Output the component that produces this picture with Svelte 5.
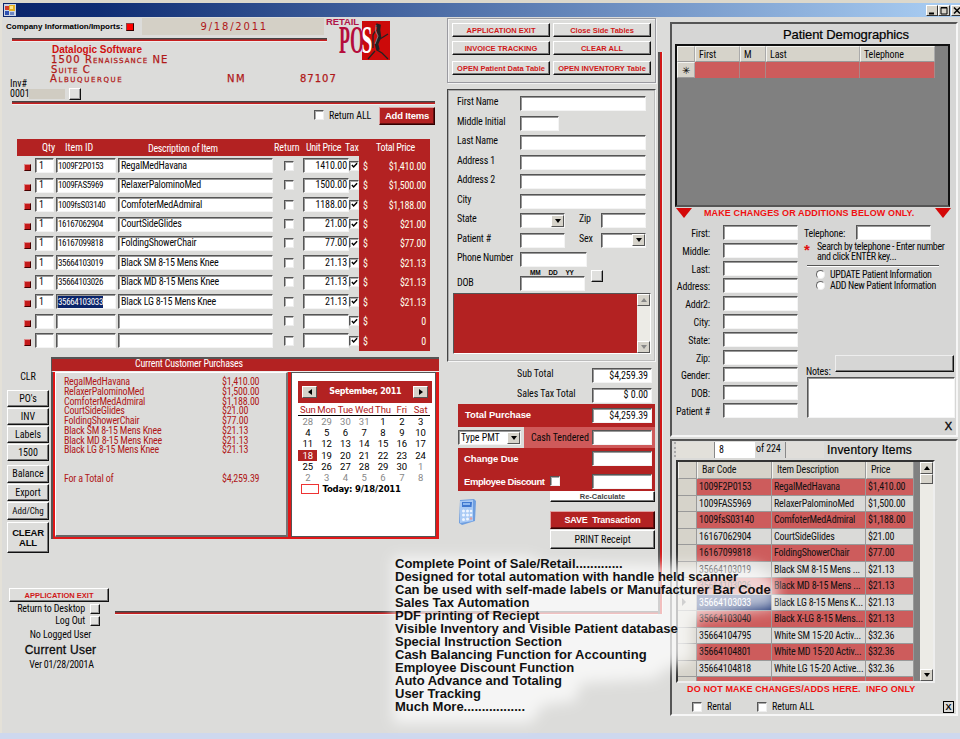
<script>
  const items = [
    { id: '1009F2P0153', name: 'RegalMedHavana', price: '1410.00', total: '$1,410.00' },
    { id: '1009FAS5969', name: 'RelaxerPalominoMed', price: '1500.00', total: '$1,500.00' },
    { id: '1009fsS03140', name: 'ComfoterMedAdmiral', price: '1188.00', total: '$1,188.00' },
    { id: '16167062904', name: 'CourtSideGlides', price: '21.00', total: '$21.00' },
    { id: '16167099818', name: 'FoldingShowerChair', price: '77.00', total: '$77.00' },
    { id: '35664103019', name: 'Black SM 8-15 Mens Knee', price: '21.13', total: '$21.13' },
    { id: '35664103026', name: 'Black MD 8-15 Mens Knee', price: '21.13', total: '$21.13' },
    { id: '35664103033', name: 'Black LG 8-15 Mens Knee', price: '21.13', total: '$21.13', selected: true },
    { id: '', name: '', price: '', total: '0' },
    { id: '', name: '', price: '', total: '0' }
  ];
  const purchases = items.filter((i) => i.id);
  const inventory = [
    ['1009F2P0153', 'RegalMedHavana', '$1,410.00'],
    ['1009FAS5969', 'RelaxerPalominoMed', '$1,500.00'],
    ['1009fsS03140', 'ComfoterMedAdmiral', '$1,188.00'],
    ['16167062904', 'CourtSideGlides', '$21.00'],
    ['16167099818', 'FoldingShowerChair', '$77.00'],
    ['35664103019', 'Black SM 8-15 Mens ...', '$21.13'],
    ['35664103026', 'Black MD 8-15 Mens ...', '$21.13'],
    ['35664103033', 'Black LG 8-15 Mens K...', '$21.13'],
    ['35664103040', 'Black X-LG 8-15 Mens...', '$21.13'],
    ['35664104795', 'White SM 15-20 Activ...', '$32.36'],
    ['35664104801', 'White MD 15-20 Activ...', '$32.36'],
    ['35664104818', 'White LG 15-20 Active...', '$32.36'],
    ['', '', '']
  ];
  const weekdays = ['Sun', 'Mon', 'Tue', 'Wed', 'Thu', 'Fri', 'Sat'];
  const days = Array.from({ length: 42 }, (_, i) => {
    const n = i - 3;
    if (n < 1) return { n: n + 31, out: true };
    if (n > 30) return { n: n - 30, out: true };
    return { n, out: false, today: n === 18 };
  });
  const patientFields = ['First:', 'Middle:', 'Last:', 'Address:', 'Addr2:', 'City:', 'State:', 'Zip:', 'Gender:', 'DOB:', 'Patient #'];
  const pitch = [
    'Complete Point of Sale/Retail.............',
    'Designed for total automation with handle held scanner',
    'Can be used with self-made labels or Manufacturer Bar Code',
    'Sales Tax Automation',
    'PDF printing of Reciept',
    'Visible Inventory and Visible Patient database',
    'Special Instruction Section',
    'Cash Balancing Function for Accounting',
    'Employee Discount Function',
    'Auto Advance and Totaling',
    'User Tracking',
    'Much More.................'
  ];
</script>

{#snippet check(on)}
  <span class="check">
    {#if on}<svg viewBox="0 0 8 8" width="7" height="7"><path d="M1 3.4 3 5.6 7 1.4" fill="none" stroke="#000" stroke-width="1.7" /></svg>{/if}
  </span>
{/snippet}

{#snippet arrow(dir)}
  <span class="arrowbtn"><i class={dir}></i></span>
{/snippet}

<div class="app">
  <header class="titlebar">
    <svg width="12" height="12" viewBox="0 0 12 12">
      <rect x="0" y="0" width="12" height="12" fill="#c9d3e4" />
      <rect x="1" y="2" width="4" height="4" fill="#d23c2a" />
      <rect x="1" y="7" width="4" height="4" fill="#2d50b0" />
      <rect x="5" y="1" width="6" height="6" fill="#e8b020" />
      <rect x="6" y="2" width="3" height="3" fill="#ffe58a" />
      <rect x="6" y="8" width="4" height="3" fill="#6d87c4" />
    </svg>
    <div class="winbtns">
      <span><svg width="10" height="9"><path d="M2 7.5h5" stroke="#000" stroke-width="2" /></svg></span>
      <span><svg width="10" height="9"><path d="M2 1.5h6v6.5h-6z M2 2h6" stroke="#000" fill="none" /></svg></span>
      <span class="close"><svg width="10" height="9"><path d="M2 1.5 8 7.5M8 1.5 2 7.5" stroke="#000" stroke-width="1.5" /></svg></span>
    </div>
  </header>

  <div class="body">
    <div class="main">
      <div class="work">
        <section class="left">
          <div class="company">
            <div class="cinfo">
              <div class="chead">
                <b class="ctitle">Company Information/Imports:</b>
                <i class="sq bright"></i>
                <div class="date">9/18/2011</div>
              </div>
              <div class="rule short"></div>
            </div>
            <svg class="logo" width="66" height="44" viewBox="0 0 66 44">
              <rect x="37" y="4" width="28" height="39" fill="#cc0a0a" />
              <text x="1" y="8" font-family="Liberation Sans" font-weight="bold" font-size="9.5" fill="#b01548" textLength="33">RETAIL</text>
              <text x="0" y="0" font-family="Liberation Serif" font-weight="bold" font-size="39" fill="#b50d3c" transform="translate(14 36) scale(.46 1)">PO</text>
              <text x="0" y="0" font-family="Liberation Serif" font-weight="bold" font-size="39" fill="#fff" transform="translate(36.500 36) scale(.5 1)">S</text>
              <g stroke="#222" fill="none">
                <path d="M51 8 54 9 53.500 13 54.500 20 51.500 27 53 33" stroke-width="3.500" />
                <path d="M51 13 48 18 48 31M55 22 63 17M50 34 43 42M52 33 57 36 63 42" stroke-width="1.300" />
                <path d="M51 8 50.500 14 53 19 50 27" stroke="#999" stroke-width=".8" />
              </g>
            </svg>
          </div>

          <div class="address">
            <b>Datalogic Software</b>
            <span>1500 Renaissance NE</span>
            <span>Suite C</span>
            <div class="cityline"><span>Albuquerque</span><span>NM</span><span>87107</span></div>
          </div>
          <div class="invno">
            <div><span>Inv#</span><span class="num">0001</span></div>
            <i class="mini"></i>
          </div>
          <div class="rule long"></div>
          <div class="addrow">
            {@render check(false)}<span>Return ALL</span>
            <button class="redbtn add">Add Items</button>
          </div>

          <div class="items">
            <div class="ihead">
              <span class="h1">Qty</span><span class="h2">Item ID</span><span class="h3">Description of Item</span>
              <span class="h4">Return</span><span class="h5">Unit Price</span><span class="h6">Tax</span><span class="h7">Total Price</span>
            </div>
            {#each items as it}
              <div class="irow">
                <i class="sq"></i>
                <span class="in qty">{it.id ? '1' : ''}</span>
                <span class="in iid"><em class:sel={it.selected}>{it.id}</em></span>
                <span class="in desc">{it.name}</span>
                {@render check(false)}
                <span class="in price">{it.price}</span>
                {@render check(true)}
                <span class="tot"><span>$</span><span>{it.total}</span></span>
              </div>
            {/each}
          </div>

          <div class="lower">
            <nav class="side">
              <span class="clr">CLR</span>
              <button>PO's</button>
              <button>INV</button>
              <button>Labels</button>
              <button>1500</button>
              <button class="bal">Balance</button>
              <button>Export</button>
              <button class="sm">Add/Chg</button>
              <button class="clear">CLEAR<br />ALL</button>
            </nav>
            <div class="purch">
              <div class="phead">Current Customer Purchases</div>
              <div class="pbody">
                <div class="plist">
                  {#each purchases as p}
                    <div><span>{p.name}</span><span>{p.total}</span></div>
                  {/each}
                  <div class="ptotal"><span>For a Total of</span><span>$4,259.39</span></div>
                </div>
                <div class="cal">
                  <div class="chd">{@render arrow('l')}<b>September, 2011</b>{@render arrow('r')}</div>
                  <div class="wk">{#each weekdays as w}<span>{w}</span>{/each}</div>
                  <div class="days">
                    {#each days as d}<span class:out={d.out} class:today={d.today}>{d.n}</span>{/each}
                  </div>
                  <div class="today-line"><i></i><b>Today: 9/18/2011</b></div>
                </div>
              </div>
            </div>
          </div>
        </section>

        <section class="mid">
          <div class="cmds">
            <button>APPLICATION EXIT</button><button>Close Side Tables</button>
            <button>INVOICE TRACKING</button><button>CLEAR ALL</button>
            <button>OPEN Patient Data Table</button><button>OPEN INVENTORY Table</button>
          </div>
          <div class="customer">
            {#each ['First Name', 'Middle Initial', 'Last Name', 'Address 1', 'Address 2', 'City'] as f, i}
              <div class="frow"><span>{f}</span><span class="in" class:short={i === 1}></span></div>
            {/each}
            <div class="frow"><span>State</span><span class="in sel44">{@render arrow('d')}</span><span class="l2">Zip</span><span class="in w44"></span></div>
            <div class="frow"><span>Patient #</span><span class="in w45"></span><span class="l2">Sex</span><span class="in w44 combo">{@render arrow('d')}</span></div>
            <div class="frow"><span>Phone Number</span><span class="in phone"></span></div>
            <div class="dobrow">
              <span class="dl">DOB</span>
              <div><div class="mdy"><span>MM</span><span>DD</span><span>YY</span></div><span class="in dob"></span></div>
              <i class="mini"></i>
            </div>
            <div class="memo"><div class="scroll">{@render arrow('u dim')}{@render arrow('d dim')}</div></div>
          </div>

          <div class="sums">
            <div class="srow"><span>Sub Total</span><span class="in">$4,259.39</span></div>
            <div class="srow"><span>Sales Tax Total</span><span class="in">$ 0.00</span></div>
          </div>
          <div class="pay">
            <div class="red"><b>Total Purchase</b><span class="in">$4,259.39</span></div>
            <div class="prow">
              <span class="in type">Type PMT{@render arrow('d')}</span>
              <div class="pink"><span>Cash Tendered</span><span class="in"></span></div>
            </div>
            <div class="red two">
              <div><b>Change Due</b><span class="in"></span></div>
              <div><b class="emp">Employee Discount</b>{@render check(false)}<span class="in"></span></div>
            </div>
          </div>
          <div class="actions">
            <svg class="calc" width="19" height="26" viewBox="0 0 19 26">
              <path d="M2 1 16 0 18 2 17 22 4 26 1 24z" fill="#6f9fe0" />
              <path d="M2 2 15 1 15 22 2 24z" fill="#a9caf5" />
              <path d="M4 3 14 3 13.500 8 4 8z" fill="#3f78d0" />
              <path d="M5 4h7v2h-7z" fill="#8db8f0" />
              <g fill="#eef5ff"><circle cx="5.500" cy="12" r="1.500" /><circle cx="9.500" cy="12" r="1.500" /><circle cx="13" cy="12" r="1.300" /><circle cx="5.500" cy="16" r="1.500" /><circle cx="9.500" cy="16" r="1.500" /><circle cx="13" cy="16" r="1.300" /><circle cx="5.500" cy="20.500" r="1.500" /><circle cx="9.500" cy="20" r="1.500" /></g>
              <circle cx="13" cy="19.500" r="1.300" fill="#e0a0a0" />
            </svg>
            <div class="acol">
              <button class="recalc">Re-Calculate</button>
              <button class="redbtn save">SAVE&nbsp; Transaction</button>
              <button class="print">PRINT Receipt</button>
            </div>
          </div>
        </section>
      </div>

      <div class="foot">
        <div class="user">
          <button class="exit">APPLICATION EXIT</button>
          <div class="ul">Return to Desktop<i class="mini s"></i></div>
          <div class="ul">Log Out<i class="mini s"></i></div>
          <span class="nolog">No Logged User</span>
          <span class="cur">Current User</span>
          <span class="ver">Ver 01/28/2001A</span>
        </div>
        <div class="rule grow"></div>
      </div>
    </div>
    <div class="vbar"></div>

    <aside class="right">
      <section class="panel patient">
        <h2>Patient Demographics</h2>
        <div class="pgrid">
          <div class="gh"><span class="c0"></span><span class="c1">First</span><span class="c2">M</span><span class="c3">Last</span><span class="c4">Telephone</span></div>
          <div class="gr"><span class="c0">✳</span><span class="c1"></span><span class="c2"></span><span class="c3"></span><span class="c4"></span></div>
        </div>
        <div class="warn"><i></i><b>MAKE CHANGES OR ADDITIONS BELOW ONLY.</b><i></i></div>
        <div class="pform">
          <div class="pf">
            {#each patientFields as f}<div><span>{f}</span><span class="in"></span></div>{/each}
          </div>
          <div class="pr">
            <div class="tel"><span>Telephone:</span><span class="in"></span></div>
            <div class="hint"><b>*</b><p>Search by telephone - Enter number<br />and click ENTER key...</p></div>
            <div class="hr"></div>
            <label><i class="radio"></i>UPDATE Patient Information</label>
            <label><i class="radio"></i>ADD New Patient Information</label>
            <div class="notes"><span>Notes:</span><button aria-label="Save notes"></button></div>
            <div class="in area"></div>
            <b class="x">X</b>
          </div>
        </div>
      </section>

      <section class="panel inv">
        <div class="ihd">
          <i class="grip"></i><i class="navl"></i><span class="pos">8</span><span class="of">of 224</span><i class="navr"></i>
          <h2>Inventory Items</h2>
        </div>
        <div class="igrid">
          <div class="tbl">
            <div class="tr th"><span></span><span>Bar Code</span><span>Item Description</span><span>Price</span></div>
            {#each inventory as r, i}
              <div class="tr" class:odd={i % 2 === 0}>
                <span class="rh">{#if i === 7}<i class="ptr"></i>{/if}</span>
                <span class:cursel={i === 7}>{r[0]}</span><span>{r[1]}</span><span>{r[2]}</span>
              </div>
            {/each}
          </div>
          <div class="scroll tall">{@render arrow('u')}<span class="thumb"></span><span class="sp"></span>{@render arrow('d')}</div>
        </div>
        <b class="info">DO NOT MAKE CHANGES/ADDS HERE.&nbsp; INFO ONLY</b>
        <div class="opts">
          {@render check(false)}<span class="o1">Rental</span>{@render check(false)}<span>Return ALL</span><b>X</b>
        </div>
      </section>
    </aside>
  </div>
  <div class="strip"></div>

  <div class="overlay">
    <svg width="440" height="200" viewBox="0 0 440 200">
      <defs><filter id="soft" x="-10%" y="-10%" width="120%" height="120%"><feGaussianBlur stdDeviation="7" /></filter></defs>
      <path d="M18 22H155L165 28 300 30H380L402 44V72L318 84V126L290 134 280 144 206 148 200 166 168 170 156 188H18z" fill="#fff" fill-opacity=".72" filter="url(#soft)" />
    </svg>
    <div class="lines">{#each pitch as line}<div>{line}</div>{/each}</div>
  </div>
</div>

<style>
  :global(body) { background: #dcdcda; }
  .app, .app :global(*) { box-sizing: border-box; }
  .app {
    position: relative; width: 960px; height: 739px; overflow: hidden;
    display: flex; flex-direction: column;
    background: #dcdcda; color: #080808; border-top: 3px solid #dcd8cc; border-left: 0;
    font: 10px/10px "Roboto Condensed", Roboto, "Liberation Sans", sans-serif; letter-spacing: -.2px; white-space: nowrap;
  }
  button { font: inherit; letter-spacing: inherit; color: inherit; padding: 0; margin: 0; background: #dddddb; white-space: nowrap;
    border: 1px solid; border-color: #fff #111 #111 #fff; box-shadow: inset -1px -1px #777; display: flex; align-items: center; justify-content: center; }
  h2 { margin: 0; font: 13px/14px "Liberation Sans", sans-serif; color: #000; -webkit-text-stroke: .2px #000; }
  p { margin: 0; }
  i, em { font-style: normal; display: block; }

  .titlebar { flex: none; height: 14px; margin-left: 3px; display: flex; justify-content: space-between; align-items: center; padding-left: 1px;
    background: linear-gradient(90deg, #0a246a, #0f2d74 10%, #a6caf0 97%); }
  .winbtns { display: flex; margin-right: -3px; }
  .winbtns span { width: 12px; height: 11px; background: #d6d3ca; border: 1px solid; border-color: #fff #333 #333 #fff; display: flex; }
  .winbtns .close { margin-left: 1px; }

  .body { flex: 1; display: flex; min-height: 0; border-left: 2px solid #e4e1d8; }
  .strip { flex: none; height: 6px; background: #ced8ee; }
  .main { width: 656px; flex: none; display: flex; flex-direction: column; }
  .work { height: 570px; display: flex; flex: none; }
  .left { width: 445px; flex: none; display: flex; flex-direction: column; }

  .in { height: 15px; background: #fff; border: 1px solid; border-color: #555 #f4f4f4 #f4f4f4 #555; box-shadow: inset 1px 1px #999; display: flex; align-items: center; padding: 0 3px; overflow: hidden; }
  .check { width: 10px; height: 10px; flex: none; background: #fff; border: 1px solid; border-color: #555 #eee #eee #555; box-shadow: inset 1px 1px #aaa; display: flex; align-items: center; justify-content: center; }
  .sq { width: 7px; height: 7px; background: #c41a1a; border: 1px solid; border-color: #d88 #400 #400 #d88; flex: none; }
  .sq.bright { width: 8px; height: 8px; background: #f00; border-color: #844 #300 #300 #844; }
  .mini { width: 12px; height: 12px; background: #e0e0de; border: 1px solid; border-color: #fff #111 #111 #fff; box-shadow: inset -1px -1px #999; flex: none; }
  .mini.s { width: 10px; height: 10px; }
  .rule { height: 4px; background: #c81e1e; border-top: 1px solid #444; border-bottom: 1px solid #eee; box-shadow: inset 0 1px #8c3232; }
  .arrowbtn { width: 13px; height: 12px; flex: none; background: #d6d3ca; border: 1px solid; border-color: #fff #555 #555 #fff; display: flex; align-items: center; justify-content: center; }
  .arrowbtn i { width: 0; height: 0; border: 3px solid transparent; }
  .arrowbtn .d { border-top: 4px solid #000; border-bottom: 0; }
  .arrowbtn .u { border-bottom: 4px solid #000; border-top: 0; }
  .arrowbtn .l { border-right: 4px solid #000; border-left: 0; }
  .arrowbtn .r { border-left: 4px solid #000; border-right: 0; }
  .arrowbtn .d.dim { border-top-color: #888; }
  .arrowbtn .u.dim { border-bottom-color: #888; }
  .redbtn { background: #b32222; color: #fff; font: bold 9.5px/12px "Liberation Sans", sans-serif; border-color: #e0a0a0 #300 #300 #e0a0a0; box-shadow: inset -1px -1px #611; }

  .company { display: flex; height: 26px; }
  .cinfo { width: 322px; }
  .chead { display: flex; height: 21px; align-items: flex-start; padding: 1px 0 0 4px; }
  .ctitle { width: 120px; font: bold 8px/18px "Liberation Sans", sans-serif; letter-spacing: 0; color: #000; }
  .chead .sq { margin: 5px 0 0 1px; }
  .date { margin-left: 8px; width: 184px; height: 17px; background: #d4d0c6; color: #b01818; padding-left: 59px; font: 10px/17px "DejaVu Sans", sans-serif; letter-spacing: 1.8px; }
  .rule.short { margin-left: 10px; width: 315px; }
  .logo { margin: 0 0 0 1px; flex: none; overflow: visible; letter-spacing: 0; }
  .address { margin: 1px 0 0 48px; display: flex; flex-direction: column; color: #b01818; font: 10px/9.7px "DejaVu Sans", sans-serif; font-variant: small-caps; height: 42px; }
  .address b { font: bold 10px/10px "Liberation Sans", sans-serif; font-variant: normal; letter-spacing: 0; color: #d01010; margin: 1px 0 0 2px; }
  .address > span { letter-spacing: 1.05px; -webkit-text-stroke: .25px #b01818; margin-left: 1px; }
  .cityline { display: grid; grid-template-columns: 177px 73px 60px; -webkit-text-stroke: .25px #b01818; letter-spacing: 1.6px; }
  .cityline span:nth-child(3) { letter-spacing: 1px; }
  .invno { display: flex; height: 13px; margin-left: 8px; align-items: flex-end; letter-spacing: 0; }
  .invno > div { width: 59px; display: flex; flex-direction: column; margin-top: -10px; }
  .invno .num { background: linear-gradient(90deg, transparent 19px, #d0ccc2 19px 55px, transparent 55px); }
  .invno .mini { margin-bottom: -1px; }
  .rule.long { margin: 2px 0 0 10px; width: 423px; }
  .addrow { display: flex; height: 20px; margin-top: 1px; margin-left: 312px; align-items: center; }
  .addrow > :global(.check) { margin-top: -2px; }
  .addrow > span:nth-child(2) { width: 49px; margin-left: 5px; letter-spacing: -.1px; }
  .add { width: 56px; height: 18px; margin-left: 1px; margin-top: 0; }

  .items { margin: 13px 0 0 15px; width: 413px; height: 212px; background: linear-gradient(90deg, transparent 342px, #b32222 342px); }
  .ihead { height: 17px; background: #b32222; color: #fff; display: flex; align-items: center; letter-spacing: 0; }
  .ihead .h1 { margin-left: 25px; width: 23px; }
  .ihead .h2 { width: 83px; } .ihead .h3 { width: 126px; padding-top: 3px; letter-spacing: -.3px; }
  .ihead .h4 { width: 32px; } .ihead .h5 { width: 39px; letter-spacing: -.3px; } .ihead .h6 { width: 31px; }
  .ihead .h7 { letter-spacing: -.3px; }
  .irow { display: flex; align-items: center; height: 19.45px; }
  .irow .sq { margin: 4px 4px 0 7px; }
  .qty { width: 19px; } .iid { width: 60px; margin-left: 2px; padding-left: 1px; font-size: 9px; letter-spacing: -.35px; } .desc { width: 155px; margin-left: 2px; padding-left: 2px; margin-right: 11px; }
  .iid .sel { background: #0a246a; color: #fff; line-height: 12px; }
  .price { width: 46px; margin-left: 9px; justify-content: flex-end; padding-right: 1px; letter-spacing: -.1px; }
  .tot { flex: 1; display: flex; justify-content: space-between; color: #ffe; padding: 2px 4px 0 4px; letter-spacing: -.2px; }

  .lower { display: flex; margin-top: 6px; }
  .side { width: 42px; margin-left: 5px; display: flex; flex-direction: column; gap: 1px; letter-spacing: 0; }
  .side button { height: 17px; } .side .clr { height: 32px; text-align: center; padding-top: 15px; }
  .side .bal { margin-top: 3px; height: 18px; } .side .sm { font-size: 9px; height: 18px; }
  .side .clear { height: 31px; margin-top: 1px; font: bold 9.5px/10px "Liberation Sans", sans-serif; text-align: center; letter-spacing: -.2px; }
  .purch { margin-left: 2px; width: 388px; height: 182px; display: flex; flex-direction: column; }
  .phead { height: 14px; background: #b32222; border-top: 2px solid #555; border-left: 1px solid #555; color: #fff; padding: 0 0 0 83px; line-height: 10px; }
  .pbody { flex: 1; display: flex; border: solid #555; border-width: 0 0 0 2px; background: #e01818; padding: 0 3px 2px 2px; gap: 3px; border-top: 1px solid #eee; }
  .plist { width: 237px; border: 1px solid #fff; border-right: 2px solid #777; border-bottom: 2px solid #666; background: #dcdcda; color: #b01818; padding: 4px 0 0 8px; line-height: 9.75px; }
  .plist div { display: grid; grid-template-columns: 158px auto; }
  .plist .ptotal { margin-top: 19px; }
  .cal { flex: 1; background: #fff; border: 1px solid #555; padding: 8px 3px 0 6px; display: flex; flex-direction: column; font: 10px/11px "Liberation Sans", sans-serif; letter-spacing: 0; }
  .chd { height: 22px; background: #b32222; color: #fff; display: flex; align-items: center; justify-content: space-between; padding: 0 4px; font: bold 8px/10px "DejaVu Sans", sans-serif; }
  .chd b { letter-spacing: -.3px; }
  .chd .arrowbtn { width: 15px; }
  .wk { display: grid; grid-template-columns: repeat(7, 18.8px); text-align: center; color: #b01818; border-bottom: 1px solid #000; height: 13px; padding-top: 1px; margin-right: 2px; font: 9.5px/11px Roboto, sans-serif; letter-spacing: -.1px; }
  .days { display: grid; grid-template-columns: repeat(7, 18.8px); text-align: center; font: 9.5px/11px Roboto, sans-serif; }
  .days span { height: 11.2px; color: #000; } .days .out { color: #888; } .days .today { background: #b32222; color: #fff; }
  .today-line { display: flex; gap: 3px; font: bold 8.5px/11px "DejaVu Sans", sans-serif; margin: 1px 0 0 3px; letter-spacing: -.2px; color: #000; }
  .today-line i { width: 18px; height: 10px; border: 1px solid #e33; }

  .mid { width: 209px; flex: none; display: flex; flex-direction: column; padding-top: 1px; }
  .cmds { height: 65px; border: 1px solid #9a9aa0; box-shadow: inset 1px 1px #f2f2f2, 1px 1px #f2f2f2; display: grid; grid-template-columns: 98px 98px; grid-template-rows: 14px 14px 14px; gap: 4px 3px; padding: 4px 0 0 4px; }
  .cmds button { color: #d01818; font: bold 7.5px/9px "Liberation Sans", sans-serif; letter-spacing: 0; }
  .cmds button:nth-child(n+5) { margin-top: 2px; height: 14px; }
  .customer { margin-top: 6px; height: 273px; border: 1px solid; border-color: #444 #f6f6f6 #f6f6f6 #444; box-shadow: inset 1px 1px #aaa, inset -1px -1px #bbb; padding: 4px 5px 0 5px; }
  .frow { height: 19.5px; display: flex; align-items: center; padding-left: 4px; }
  .frow > span:first-child { width: 63px; margin-top: -3px; letter-spacing: -.2px; }
  .frow .in { width: 126px; } .frow .in.short { width: 39px; }
  .frow .in.sel44 { width: 45px; padding: 0; justify-content: flex-end; } .frow .w44 { width: 45px; } .frow .w45 { width: 45px; } .frow .combo { padding: 0; justify-content: flex-end; }
  .l2 { width: 22px; margin: -3px 0 0 14px; } .frow .phone { width: 67px; }
  .dobrow { display: flex; height: 23px; padding-left: 4px; align-items: flex-start; }
  .dobrow .dl { width: 63px; padding-top: 8px; }
  .mdy { display: flex; gap: 8px; padding-left: 10px; font: bold 6.5px/6px "Liberation Sans", sans-serif; }
  .dob { width: 65px; } .dobrow .mini { margin: 0 0 0 6px; }
  .memo { height: 61px; width: 198px; background: #b32222; border: 1px solid; border-color: #555 #fff #fff #555; display: flex; justify-content: flex-end; }
  .scroll { width: 13px; display: flex; flex-direction: column; justify-content: space-between; background: #ecebe6; }

  .sums { padding: 4px 4px 1px 70px; letter-spacing: -.05px; }
  .srow { display: flex; height: 19.5px; align-items: center; justify-content: space-between; }
  .srow > span:first-child { margin-top: -3px; }
  .srow .in, .pay .in { width: 60px; justify-content: flex-end; }
  .pay { margin: -2px 0 0 11px; width: 197px; letter-spacing: -.05px; }
  .pay b { font: bold 9.5px/10px "Liberation Sans", sans-serif; letter-spacing: -.1px; }
  .red { height: 23px; background: #b32222; color: #fff; display: flex; align-items: center; justify-content: space-between; padding: 0 3px 0 7px; }
  .red b { margin-top: -2px; }
  .red .in { color: #111; }
  .prow { height: 21px; display: flex; justify-content: space-between; align-items: center; }
  .prow .in.type { width: 63px; justify-content: space-between; padding: 0 0 0 2px; }
  .pink { width: 131px; height: 21px; background: #cf5a5a; display: flex; align-items: center; justify-content: space-between; padding: 0 3px 0 7px; }
  .red.two { height: 43px; flex-direction: column; align-items: stretch; padding: 3px 3px 2px 6px; }
  .red.two > div { display: flex; justify-content: space-between; align-items: center; }
  .red.two b { padding-top: 2px; } .red.two .emp { letter-spacing: -.45px; } .red.two div > :global(.check) { margin: -2px 27px 0 0; }
  .actions { display: flex; margin: 0 0 0 11px; }
  .calc { margin: 8px 73px 0 0; flex: none; }
  .acol { width: 105px; display: flex; flex-direction: column; }
  .recalc { height: 11px; background: #fff; font: bold 7.5px/8px "Liberation Sans", sans-serif; color: #444; letter-spacing: 0; }
  .save { height: 18px; margin-top: 9px; font-size: 9px; } .print { height: 19px; margin-top: 1px; background: #e2e2e0; letter-spacing: 0; }

  .foot { display: flex; }
  .user { width: 111px; display: flex; flex-direction: column; align-items: center; }
  .exit { width: 100px; height: 14px; color: #d01818; font: bold 7.5px/9px "Liberation Sans", sans-serif; letter-spacing: 0; margin: 1px 0 0 3px; }
  .ul { height: 11px; display: flex; align-items: center; gap: 5px; align-self: flex-end; margin: 1px 13px 0 0; letter-spacing: -.15px; }
  .nolog { margin-top: 4px; margin-left: 6px; letter-spacing: -.1px; } .cur { font: 12px/12px "Liberation Sans", sans-serif; margin-top: 4px; margin-left: 6px; letter-spacing: .25px; -webkit-text-stroke: .3px #111; } .ver { margin-top: 4px; margin-left: 8px; letter-spacing: -.25px; }
  .rule.grow { flex: 1; margin: 24px 0 0 2px; }
  .vbar { width: 5px; height: 562px; margin: 35px 0 0 0; flex: none; background: linear-gradient(90deg, #555 0 2px, #d01818 2px 4px, #eee 4px); }

  .right { width: 288px; margin: 5px 0 0 7px; flex: none; display: flex; flex-direction: column; gap: 2px; }
  .panel { background: #d6d6d5; border: 2px solid; border-color: #555 #f6f6f6 #f6f6f6 #555; display: flex; flex-direction: column; }
  .patient { height: 415px; }
  .patient h2 { margin: 4px 0 0 111px; letter-spacing: -.1px; }
  .pgrid { margin: 2px 0 0 3px; width: 275px; height: 163px; background: #808080; border: 2px solid; border-color: #111 #111 #555 #111; }
  .pgrid > div { display: flex; height: 16px; letter-spacing: -.1px; }
  .pgrid .c0 { width: 18px; text-align: center; line-height: 15px; } .c1 { width: 45px; } .c2 { width: 26px; } .c3 { width: 94px; } .c4 { width: 75px; }
  .gh span, .gr .c0 { background: #d6d3ca; border: 1px solid; border-color: #f4f4f0 #aaa #999 #f4f4f0; }
  .gh span { padding: 3px 0 0 3px; } .gr span:not(.c0) { background: #cd5c5c; border-right: 1px solid #a88; }
  .warn { display: flex; align-items: flex-start; padding: 0 0 0 4px; height: 18px; color: #f01010; }
  .warn b { width: 243px; padding-left: 12px; font: bold 9px/12px "Liberation Sans", sans-serif; letter-spacing: .12px; }
  .warn i { border: 8px solid transparent; border-top: 10px solid #d40808; border-bottom: 0; margin-top: 1px; }
  .pform { display: flex; }
  .pf { width: 126px; }
  .pf div { height: 17.8px; display: flex; align-items: flex-start; }
  .pf div > span:first-child { width: 38px; text-align: right; margin: 4px 13px 0 0; } .pf .in { width: 75px; }
  .pr { flex: 1; padding-left: 6px; display: flex; flex-direction: column; }
  .tel { display: flex; gap: 0; align-items: flex-start; } .tel span:first-child { width: 52px; padding-top: 4px; } .tel .in { width: 75px; }
  .hint { display: flex; height: 26px; margin-top: 1px; } .hint b { width: 13px; color: #e01010; font: bold 15px/17px "Liberation Sans", sans-serif; }
  .hint p { padding-top: 1px; letter-spacing: -.35px; }
  .hr { width: 132px; height: 2px; margin: -2px 0 2px 3px; background: #555; border-bottom: 1px solid #fff; }
  .pr label { display: flex; align-items: center; height: 11px; padding-left: 12px; gap: 5px; letter-spacing: -.35px; }
  .radio { width: 9px; height: 9px; border-radius: 50%; background: #fff; border: 1px solid; border-color: #666 #eee #eee #666; }
  .notes { margin-top: 63px; display: flex; height: 23px; align-items: flex-end; } .notes span { width: 31px; padding-left: 2px; } .notes button { width: 119px; height: 17px; margin-bottom: 5px; background: transparent; border-color: #eee #111 #111 #eee; }
  .in.area { height: 41px; width: 148px; margin-left: 3px; }
  .x { text-align: right; padding: 3px 4px 0 0; font: 11px/10px "Liberation Sans", sans-serif; -webkit-text-stroke: .4px #000; }

  .inv { height: 277px; background: #dadad8; }
  .ihd { display: flex; height: 19px; padding: 1px 0 0 2px; letter-spacing: -.1px; }
  .grip { width: 2px; border-left: 2px dotted #aaa; height: 15px; } .navl { width: 39px; height: 16px; background: #e2e0da; border-right: 1px solid #888; }
  .pos { width: 40px; height: 16px; background: #fff; padding: 3px 0 0 4px; } .of { padding: 2px 0 0 1px; width: 28px; } .navr { width: 39px; height: 16px; margin-left: 2px; background: #e0deda; border-left: 1px solid #888; }
  .ihd h2 { margin-left: 3px; font-size: 12px; letter-spacing: .2px; line-height: 16px; }
  .igrid { margin: 0 0 0 4px; width: 259px; height: 223px; border: 2px solid; border-color: #333 #eee #eee #333; background: #808080; display: flex; justify-content: space-between; overflow: hidden; }
  .tbl { width: 236px; overflow: hidden; letter-spacing: -.2px; }
  .tr { display: grid; grid-template-columns: 19px 75px 94px 48px; height: 16.5px; }
  .tr.th { height: 17px; }
  .tr span { background: #dadad8; border-right: 1px solid #999; border-bottom: 1px solid #999; padding: 3px 0 0 2px; overflow: hidden; color: #111; }
  .tr.odd span { background: #cd5c5c; } .tr .rh, .tr.odd .rh, .tr.th span { background: #d6d3ca; }
  .tr.th span { padding: 3px 0 0 4px; border-left: 1px solid #f4f4f0; }
  .tr .cursel { background: #0a246a; color: #fff; }
  .ptr { border: 4px solid transparent; border-left: 4px solid #555; border-right: 0; margin-left: 2px; }
  .scroll.tall { justify-content: flex-start; } .thumb { height: 10px; background: #d6d3ca; border: 1px solid; border-color: #fff #555 #555 #fff; } .sp { flex: 1; }
  .info { color: #f01010; font: bold 9px/12px "Liberation Sans", sans-serif; letter-spacing: .14px; margin-left: 15px; }
  .opts { display: flex; align-items: center; margin: 6px 2px 0 20px; letter-spacing: -.1px; }
  .opts .o1 { width: 50px; } .opts > span:not(:global(.check)) { margin-left: 5px; }
  .opts b { margin-left: auto; width: 11px; height: 12px; border: 1px solid #000; text-align: center; font: bold 9px/10px "Liberation Sans", sans-serif; }

  .overlay { position: absolute; left: 375px; top: 532px; pointer-events: none; }
  .overlay svg { display: block; overflow: visible; }
  .lines { position: absolute; left: 20px; top: 22px; font: bold 13px/13px "Liberation Sans", sans-serif; letter-spacing: 0; color: #111; }
</style>
